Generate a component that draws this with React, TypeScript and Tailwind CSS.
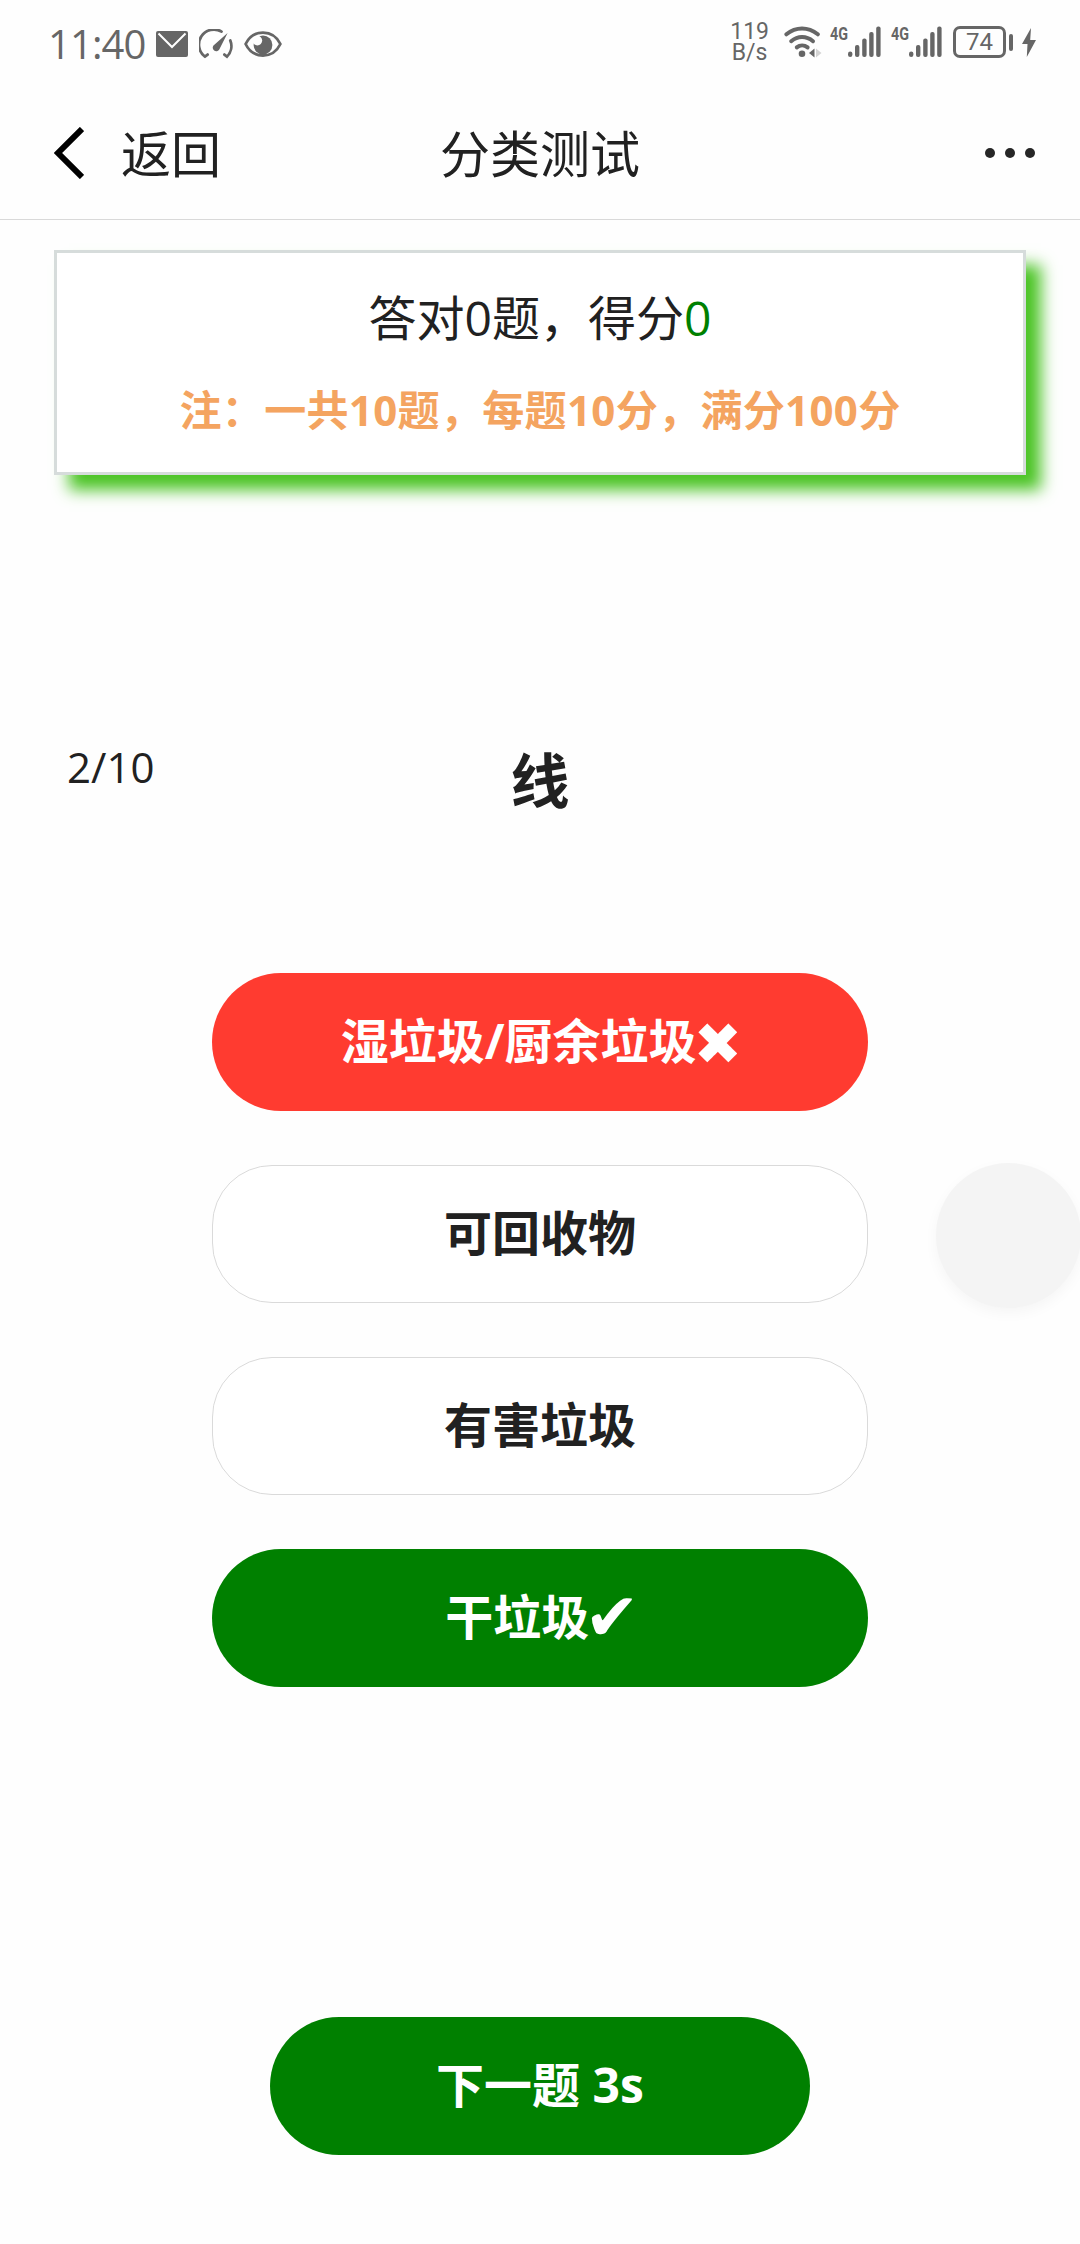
import clsx from "clsx";

type OptionState = "idle" | "wrong" | "right";

type Option = {
  label: string;
  state: OptionState;
};

const OPTIONS: Option[] = [
  { label: "湿垃圾/厨余垃圾", state: "wrong" },
  { label: "可回收物", state: "idle" },
  { label: "有害垃圾", state: "idle" },
  { label: "干垃圾", state: "right" },
];

function IconMail() {
  return (
    <svg width="32" height="26" viewBox="0 0 32 26" aria-hidden>
      <rect width="32" height="26" rx="2" fill="currentColor" />
      <path d="M2.5 2.5L16 16L29.5 2.5" fill="none" stroke="#fff" strokeWidth="2" />
    </svg>
  );
}

function IconGauge() {
  return (
    <svg width="34" height="31" viewBox="0 0 34 31" fill="none" stroke="currentColor" aria-hidden>
      <path d="M22.5 2.6A15 15 0 0 0 6 27.6L8.6 25.6" strokeWidth="2.8" strokeLinecap="round" />
      <path d="M31.3 11.5A15 15 0 0 1 28 27.6L25.4 25.6" strokeWidth="2.8" strokeLinecap="round" />
      <path d="M28.6 4L20.8 19.4A3.6 3.6 0 1 1 15.6 15.4Z" fill="currentColor" stroke="none" />
    </svg>
  );
}

function IconEye() {
  return (
    <svg width="38" height="26" viewBox="0 0 38 26" aria-hidden>
      <circle cx="19" cy="14" r="9.4" fill="currentColor" />
      <circle cx="13.4" cy="9.6" r="4.8" fill="#fefefe" />
      <path
        d="M1.6 13C9 -2.3 29 -2.3 36.4 13C29 28.3 9 28.3 1.6 13Z"
        fill="none"
        stroke="currentColor"
        strokeWidth="2.8"
        strokeLinejoin="round"
      />
    </svg>
  );
}

function IconWifi() {
  return (
    <svg width="38" height="32" viewBox="0 0 38 32" fill="none" aria-hidden>
      <g stroke="currentColor" strokeWidth="4" strokeLinecap="round">
        <path d="M2.4 8.3C12 .4 24 .4 33.8 8.3" />
        <path d="M7.2 15.2C13.8 9.6 22.2 9.6 29 15.2" />
        <path d="M12.8 21.4C16 18.7 20.2 18.7 23.6 21.4" />
      </g>
      <circle cx="18" cy="27.7" r="3.3" fill="currentColor" />
      <path d="M25 27L30.5 22.5V31.5Z" fill="currentColor" />
      <path d="M37.5 27L32 22.5V31.5Z" fill="#d4d4d4" />
    </svg>
  );
}

function IconSignal() {
  return (
    <svg className="overflow-visible" width="51" height="32" viewBox="0 0 51 32" fill="currentColor" aria-hidden>
      <text
        x="0"
        y="14.4"
        fontSize="19"
        fontWeight="700"
        textLength="18"
        lengthAdjust="spacingAndGlyphs"
        className="font-[Roboto,sans-serif]"
      >
        4G
      </text>
      <rect x="18" y="25.5" width="4.4" height="5.5" rx="2.2" />
      <rect x="25" y="19" width="4.4" height="12" rx="2" />
      <rect x="32.2" y="12.5" width="4.4" height="18.5" rx="2" />
      <rect x="39.2" y="6" width="4.4" height="25" rx="2" />
      <rect x="46.2" y="0.5" width="4.4" height="30.5" rx="2" />
    </svg>
  );
}

function Battery({ level }: { level: number }) {
  return (
    <div className="flex items-center gap-[3px]">
      <div className="flex h-8 w-[53px] items-center justify-center rounded-[7px] border-[3px] border-[#666] font-[Roboto,sans-serif] text-[24px] leading-none font-normal">
        {level}
      </div>
      <div className="h-[17px] w-1 rounded-full bg-[#666]" />
    </div>
  );
}

function StatusBar() {
  return (
    <div className="flex h-[87px] items-start justify-between pr-[44px] pl-[48px] text-[#666]">
      <div className="flex items-center pt-[15px]">
        <span className="w-[108px] text-[40px] leading-[58px] font-medium tracking-[-0.9px]">11:40</span>
        <IconMail />
        <span className="ml-[11px]">
          <IconGauge />
        </span>
        <span className="ml-[11px]">
          <IconEye />
        </span>
      </div>
      <div className="flex items-center pt-[21px]">
        <div className="mr-[15px] text-center font-[Roboto,sans-serif] text-[23px] leading-[21px]">
          <div>119</div>
          <div>B/s</div>
        </div>
        <IconWifi />
        <span className="ml-[8px]">
          <IconSignal />
        </span>
        <span className="mr-[11px] ml-[10px]">
          <IconSignal />
        </span>
        <Battery level={74} />
        <svg className="ml-[9px]" width="14" height="29" viewBox="0 0 14 29" fill="currentColor" aria-hidden>
          <path d="M9 0L0 16H5.5L4.8 29L14 12H8.2Z" />
        </svg>
      </div>
    </div>
  );
}

function NavBar() {
  return (
    <header className="grid h-[133px] grid-cols-3 items-center border-b border-[#d9d9d9] px-[45px] text-[50px] leading-[74px]">
      <button type="button" className="flex items-center gap-[37px] pl-[9px] text-left">
        <svg width="30" height="52" viewBox="0 0 30 52" fill="none" stroke="#000" strokeWidth="6" aria-hidden>
          <path d="M28 2L4 26L28 50" />
        </svg>
        <span className="pt-px">返回</span>
      </button>
      <h1 className="pt-px text-center">分类测试</h1>
      <div className="flex justify-end gap-[10px]">
        <span className="size-[10px] rounded-full bg-[#262626]" />
        <span className="size-[10px] rounded-full bg-[#262626]" />
        <span className="size-[10px] rounded-full bg-[#262626]" />
      </div>
    </header>
  );
}

function OptionButton({ label, state }: Option) {
  return (
    <button
      type="button"
      className={clsx(
        "flex h-[138px] w-[656px] items-center justify-center pb-[2px] text-[48px] font-bold",
        state === "idle" && "rounded-[60px] border border-[#dadada] bg-white",
        state === "wrong" && "rounded-full bg-[#ff3b30] text-white",
        state === "right" && "rounded-full bg-[#008000] text-white",
      )}
    >
      {label}
      {state === "wrong" ? (
        <span className="-mx-[3px] pt-[6px] font-['DejaVu_Sans',sans-serif] text-[58px] leading-none">✖</span>
      ) : null}
      {state === "right" ? (
        <span className="-mx-[5px] pt-[2px] font-['DejaVu_Sans',sans-serif] text-[66px] leading-none">✔</span>
      ) : null}
    </button>
  );
}

export default function App() {
  return (
    <div
      lang="zh-CN"
      className="relative flex h-[2244px] w-[1080px] flex-col overflow-hidden bg-[#fefefe] font-['Open_Sans','Noto_Sans_CJK_SC',sans-serif] text-[#212121]"
    >
      <StatusBar />
      <NavBar />

      <section className="mx-[54px] mt-[30px] flex h-[225px] flex-col items-center border-[3px] border-[#d6dcdb] bg-white pt-[29px] shadow-[15px_15px_15px_#4bc425]">
        <p className="text-[48px] leading-[72px]">
          答对0题，得分<span className="text-[#008000]">0</span>
        </p>
        <p className="mt-[24px] text-[42px] leading-[63px] font-bold tracking-[0.35px] text-[#f4a460]">
          注：一共10题，每题10分，满分100分
        </p>
      </section>

      <main className="flex flex-col items-center">
        <div className="mt-[260px] grid w-full grid-cols-3 px-[67px]">
          <span className="text-[42px] leading-[63px]">2/10</span>
          <h2 className="text-center text-[59px] leading-[90px] font-bold">线</h2>
        </div>

        <div className="mt-[148px] flex flex-col gap-[54px]">
          {OPTIONS.map((o) => (
            <OptionButton key={o.label} {...o} />
          ))}
        </div>

        <button
          type="button"
          className="mt-[330px] h-[138px] w-[540px] rounded-full bg-[#008000] pb-[2px] text-[48px] font-bold text-white"
        >
          下一题 3s
        </button>
      </main>

      {/* floating assistive ball, hangs over the right edge */}
      <div className="absolute top-[1163px] left-[936px] size-[145px] rounded-full bg-[#f4f4f4] shadow-[0_5px_14px_rgba(0,0,0,0.04)]" />
    </div>
  );
}
